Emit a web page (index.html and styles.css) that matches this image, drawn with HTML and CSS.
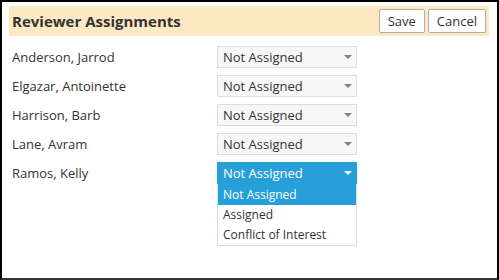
FILE: index.html
```html
<!DOCTYPE html>
<html>
<head>
<meta charset="utf-8">
<link rel="stylesheet" href="styles.css">
</head>
<body>
<div class="frame">
  <div class="header">
    <h1 class="title">Reviewer Assignments</h1>
    <div class="actions">
      <button class="btn">Save</button>
      <button class="btn">Cancel</button>
    </div>
  </div>
  <div class="rows">
    <div class="row">
      <span class="name">Anderson, Jarrod</span>
      <div class="select"><span>Not Assigned</span><i class="caret"></i></div>
    </div>
    <div class="row">
      <span class="name">Elgazar, Antoinette</span>
      <div class="select"><span>Not Assigned</span><i class="caret"></i></div>
    </div>
    <div class="row">
      <span class="name">Harrison, Barb</span>
      <div class="select"><span>Not Assigned</span><i class="caret"></i></div>
    </div>
    <div class="row">
      <span class="name">Lane, Avram</span>
      <div class="select"><span>Not Assigned</span><i class="caret"></i></div>
    </div>
    <div class="row">
      <span class="name">Ramos, Kelly</span>
      <div class="select open"><span>Not Assigned</span><i class="caret"></i>
        <ul class="menu">
          <li class="opt active">Not Assigned</li>
          <li class="opt">Assigned</li>
          <li class="opt">Conflict of Interest</li>
        </ul>
      </div>
    </div>
  </div>
</div>
</body>
</html>
```

FILE: styles.css
```css
* { box-sizing: border-box; }
html, body { margin: 0; padding: 0; background: #fff; }
body { font-family: "Open Sans", "Noto Sans", sans-serif; color: #333; }
.frame {
  width: 499px;
  height: 280px;
  border: 2px solid #000;
  border-bottom-color: #333;
  padding: 4px 8px 0 7px;
}
.header {
  height: 30px;
  background: #fde8c4;
  display: flex;
  align-items: center;
  justify-content: space-between;
  padding: 0 3px 0 3px;
}
.title {
  margin: 0;
  font-size: 15px;
  font-weight: 700;
  color: #333;
}
.actions { display: flex; gap: 3px; }
.btn {
  height: 24px;
  background: #fff;
  border: 1px solid #adadad;
  border-radius: 2px;
  font-family: inherit;
  font-size: 13px;
  color: #333;
  padding: 0 8px;
}
.rows {
  display: flex;
  flex-direction: column;
  gap: 7px;
  margin-top: 10px;
  padding-left: 3px;
}
.row {
  display: grid;
  grid-template-columns: 205px 140px;
  align-items: center;
  height: 22px;
}
.name { font-size: 13px; }
.select {
  position: relative;
  height: 22px;
  background: #f7f7f7;
  border: 1px solid #ddd;
  font-size: 13px;
  display: flex;
  align-items: center;
  padding-left: 5px;
}
.caret {
  position: absolute;
  right: 4px;
  top: 8px;
  width: 0; height: 0;
  border-left: 4px solid transparent;
  border-right: 4px solid transparent;
  border-top: 4px solid #808080;
}
.select.open { background: #27a0da; border-color: #27a0da; color: #fff; }
.select.open .caret { border-top-color: #fff; }
.menu {
  position: absolute;
  left: -1px;
  top: 21px;
  width: 140px;
  margin: 0;
  padding: 0;
  list-style: none;
  background: #fff;
  border: 1px solid #ddd;
  border-top: none;
}
.opt {
  height: 20px;
  line-height: 20px;
  font-size: 12px;
  padding-left: 5px;
  color: #333;
}
.opt.active { background: #27a0da; color: #fff; height: 21px; line-height: 21px; }
```
